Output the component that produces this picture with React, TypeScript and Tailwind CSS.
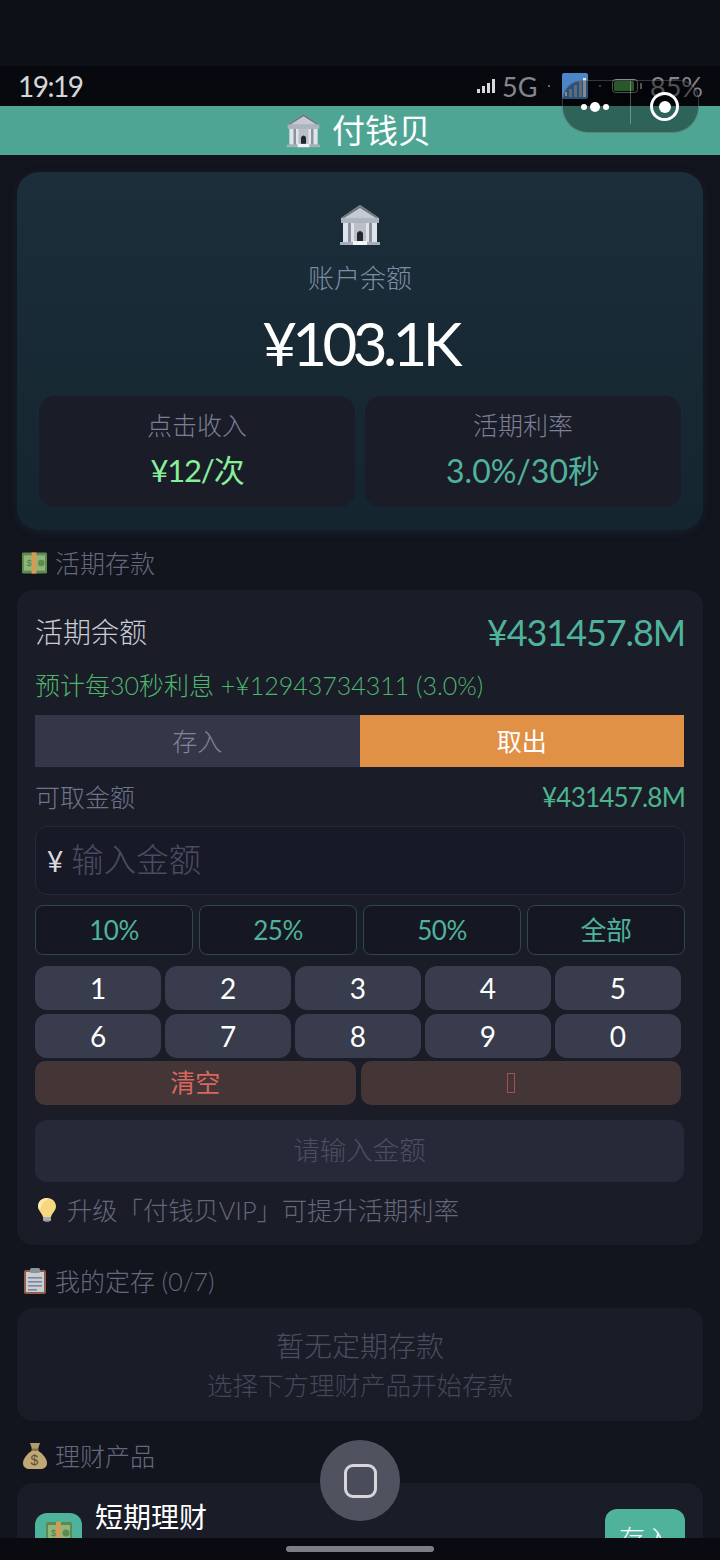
import React from "react";

function Bank({ className }: { className: string }) {
  return (
    <svg viewBox="0 0 42 42" className={className}>
      <path d="M21 1 L40 14 H2 Z" fill="#c4cad3" />
      <path d="M21 1 L40 14 H37 L21 4 L5 14 H2 Z" fill="#6f7681" />
      <rect x="2" y="14" width="38" height="5" fill="#aeb4bf" />
      <rect x="4" y="19" width="34" height="19" fill="#dfe3ea" />
      <rect x="9" y="19" width="3" height="19" fill="#8c929e" />
      <rect x="30" y="19" width="3" height="19" fill="#8c929e" />
      <rect x="15" y="19" width="12" height="19" fill="#b9bec8" />
      <path d="M18 38 V29 Q21 25 24 29 V38 Z" fill="#23262e" />
      <rect x="1" y="38" width="40" height="3" fill="#a9afba" />
      <rect x="14" y="37" width="14" height="4" fill="#f3f4f6" />
    </svg>
  );
}

function Cash({ className }: { className: string }) {
  return (
    <svg viewBox="0 0 26 24" className={className}>
      <rect x="0" y="1" width="26" height="22" rx="1.5" fill="#5d8a4e" />
      <rect x="2" y="4" width="22" height="16" fill="#8fb57b" />
      <rect x="10" y="1" width="5" height="22" fill="#d59a55" />
      <text x="5" y="15" fontSize="9" fill="#4d7a42" fontFamily="Liberation Sans, sans-serif">$</text>
      <circle cx="20" cy="12" r="3.5" fill="#5d8a4e" />
    </svg>
  );
}

function Bulb({ className }: { className: string }) {
  return (
    <svg viewBox="0 0 18 24" className={className}>
      <path d="M9 0 C3.5 0 0 4 0 8.5 C0 12.5 4 15 5 19 H13 C14 15 18 12.5 18 8.5 C18 4 14.5 0 9 0 Z" fill="#f6d77e" />
      <path d="M9 0 C3.5 0 0 4 0 8.5 C0 10 1 11 2 12 C3 7 6 3 11 0.3 Z" fill="#fbe9ad" />
      <rect x="5" y="19" width="8" height="4" rx="1" fill="#a8abb3" />
      <rect x="6.5" y="22.5" width="5" height="1.5" rx=".7" fill="#7d808a" />
    </svg>
  );
}

function Clip({ className }: { className: string }) {
  return (
    <svg viewBox="0 0 22 26" className={className}>
      <rect x="0" y="2" width="22" height="24" rx="2" fill="#94604d" />
      <rect x="2" y="4" width="18" height="20" fill="#c9ced6" />
      <rect x="6" y="0" width="10" height="5" rx="1.5" fill="#8d919a" />
      <rect x="4" y="9" width="14" height="1.6" fill="#7f8794" />
      <rect x="4" y="13" width="14" height="1.6" fill="#7f8794" />
      <rect x="4" y="17" width="14" height="1.6" fill="#7f8794" />
      <rect x="4" y="21" width="9" height="1.6" fill="#7f8794" />
    </svg>
  );
}

function Bag({ className }: { className: string }) {
  return (
    <svg viewBox="0 0 24 26" className={className}>
      <path d="M7 0 H17 L15 6 H9 Z" fill="#b39a6c" />
      <rect x="8.5" y="5.5" width="7" height="2" fill="#8a6f47" />
      <path d="M9 7.5 H15 C20 11 24 16 24 20 C24 24 21 26 17 26 H7 C3 26 0 24 0 20 C0 16 4 11 9 7.5 Z" fill="#c0a877" />
      <text x="7.5" y="22" fontSize="14" fill="#5f4f33" fontFamily="Liberation Sans, sans-serif">$</text>
    </svg>
  );
}

function SectionTitle({ icon, className, children }: { icon: React.ReactNode; className: string; children: React.ReactNode }) {
  return (
    <div className={`flex items-center pl-[5px] text-[25px] font-light text-[#646a7d] ${className}`}>
      <span className="mr-[8px] flex w-[25px] justify-center">{icon}</span>
      <span>{children}</span>
    </div>
  );
}

const keys = ["1", "2", "3", "4", "5", "6", "7", "8", "9", "0"];
const pcts = ["10%", "25%", "50%", "全部"];

export default function App() {
  return (
    <div
      className="relative h-[1560px] w-[720px] overflow-hidden bg-[#12141e] leading-none text-white"
      style={{ fontFamily: 'Lato, "Noto Sans CJK SC", sans-serif' }}
    >
      <div className="h-[66px] bg-[#0e1018]" />
      <div className="flex h-[40px] items-center justify-between bg-[#08090f] pl-[18px] pr-[17px]">
        <span className="text-[28px] tracking-[-1.5px] text-[#d6d6d8]">19:19</span>
        <div className="flex items-center text-[27px] text-[#85868c]">
          <svg viewBox="0 0 18 14" className="h-[14px] w-[18px]">
            <rect x="0" y="10" width="3" height="4" fill="#d8d8dc" />
            <rect x="5" y="7" width="3" height="7" fill="#d8d8dc" />
            <rect x="10" y="4" width="3" height="10" fill="#d8d8dc" />
            <rect x="15" y="0" width="3" height="14" fill="#d8d8dc" />
          </svg>
          <span className="ml-[7px] w-[34px]">5G</span>
          <span className="ml-[12px] h-[2px] w-[2px] rounded-full bg-[#85868c]" />
          <svg viewBox="0 0 26 26" className="ml-[12px] h-[26px] w-[26px]">
            <rect width="26" height="26" rx="2" fill="#4a86c8" />
            <rect x="3" y="19" width="2" height="4" fill="#dfe6ee" />
            <rect x="7" y="16" width="3" height="8" fill="#9cb4cc" />
            <rect x="12" y="12" width="3" height="12" fill="#9cb4cc" />
            <rect x="17" y="8" width="3" height="16" fill="#9cb4cc" />
            <rect x="21" y="5" width="3" height="19" fill="#dfe6ee" />
          </svg>
          <span className="ml-[11px] h-[2px] w-[2px] rounded-full bg-[#85868c]" />
          <svg viewBox="0 0 30 14" className="ml-[11px] h-[14px] w-[30px]">
            <rect x="0.5" y="0.5" width="25" height="13" rx="3" fill="none" stroke="#8a8b90" />
            <rect x="2" y="2" width="20" height="10" rx="1.5" fill="#449146" />
            <rect x="28" y="4" width="2" height="6" fill="#8a8b90" />
          </svg>
          <span className="ml-[8px]">85%</span>
        </div>
      </div>
      <div className="flex h-[49px] items-center justify-center bg-[#4ea594] pr-[3px] text-[33px] font-normal text-white">
        <Bank className="mr-[11px] h-[35px] w-[35px]" />
        <span>付钱贝</span>
      </div>

      <main className="flex flex-col px-[17px] pt-[17px]">
        <section className="flex h-[358px] flex-col items-center rounded-[22px] bg-linear-to-b from-[#1c2e3a] to-[#14252f] px-[22px] pt-[32px] shadow-[0_2px_10px_rgba(30,70,80,0.25)]">
          <Bank className="h-[42px] w-[42px]" />
          <div className="mt-[19px] text-[26px] font-light text-[#7f8ca6]">账户余额</div>
          <div className="mt-[22px] text-[60px] font-normal tracking-[-4.6px] text-white">¥103.1K</div>
          <div className="mt-[23px] grid w-full grid-cols-2 gap-[10px]">
            <div className="flex h-[111px] flex-col items-center rounded-[16px] bg-[#1a1c28] pt-[17px]">
              <div className="text-[25px] font-light text-[#7b8095]">点击收入</div>
              <div className="mt-[17px] text-[31px] tracking-[-1.2px] text-[#86ef9a]">¥12/次</div>
            </div>
            <div className="flex h-[111px] flex-col items-center rounded-[16px] bg-[#1a1c28] pt-[17px]">
              <div className="text-[25px] font-light text-[#7b8095]">活期利率</div>
              <div className="mt-[17px] text-[32px] text-[#4fb39b]">3.0%/30秒</div>
            </div>
          </div>
        </section>

        <SectionTitle className="h-[60px] pt-[6px]" icon={<Cash className="h-[24px] w-[26px]" />}>活期存款</SectionTitle>

        <section className="flex h-[655px] flex-col rounded-[16px] bg-[#1a1c28] px-[18px] pt-[23px]">
          <div className="flex h-[38px] items-center justify-between">
            <span className="text-[28px] font-light text-[#c9ccd4]">活期余额</span>
            <span className="text-[36px] tracking-[-1.1px] text-[#4fb39b]">¥431457.8M</span>
          </div>
          <div className="mt-[22px] text-[25px] font-light text-[#4db56e]">预计每30秒利息 +¥12943734311 (3.0%)</div>
          <div className="mt-[17px] grid h-[52px] w-[649px] grid-cols-2 text-[25px]">
            <div className="flex items-center justify-center bg-[#353749] font-light text-[#80849b]">存入</div>
            <div className="flex items-center justify-center bg-[#e09146] text-white">取出</div>
          </div>
          <div className="mt-[17px] flex h-[26px] items-center justify-between">
            <span className="text-[25px] font-light text-[#6f7488]">可取金额</span>
            <span className="text-[26px] tracking-[-0.8px] text-[#4cb58e]">¥431457.8M</span>
          </div>
          <div className="mt-[16px] flex h-[69px] w-[650px] items-center rounded-[12px] border border-[#262a38] bg-[#171927] pl-[11px]">
            <span className="text-[28px] text-[#d8d9de]">¥</span>
            <span className="ml-[8px] text-[32.5px] font-light text-[#4a4d60]">输入金额</span>
          </div>
          <div className="mt-[10px] grid w-[650px] grid-cols-4 gap-[6px]">
            {pcts.map((p) => (
              <div key={p} className="flex h-[50px] items-center justify-center rounded-[8px] border border-[#2a4a4c] bg-[#151722] text-[26px] tracking-[-0.5px] text-[#4fb39b]">
                {p}
              </div>
            ))}
          </div>
          <div className="mt-[11px] grid w-[646px] grid-cols-5 gap-[3.5px]">
            {keys.map((k) => (
              <div key={k} className="flex h-[44px] items-center justify-center rounded-[12px] bg-[#393c4c] text-[28px] font-normal text-white">
                {k}
              </div>
            ))}
          </div>
          <div className="mt-[3px] grid w-[646px] grid-cols-2 gap-[5px]">
            <div className="flex h-[44px] items-center justify-center rounded-[10px] bg-[#443636] text-[25px] text-[#d9665f]">清空</div>
            <div className="flex h-[44px] items-center justify-center rounded-[10px] bg-[#443636]">
              <span className="mr-[20px] h-[20px] w-[8px] border border-[#a0524e]" />
            </div>
          </div>
          <div className="mt-[15px] flex h-[62px] w-[649px] items-center justify-center rounded-[12px] bg-[#272938] text-[26.5px] font-light text-[#4c4f62]">
            请输入金额
          </div>
          <div className="mt-[16px] flex items-center pl-[3px] text-[25.3px] font-light text-[#636779]">
            <Bulb className="h-[24px] w-[18px]" />
            <span className="ml-[11px]">升级「付钱贝VIP」可提升活期利率</span>
          </div>
        </section>

        <SectionTitle className="h-[63px] pt-[9px]" icon={<Clip className="h-[26px] w-[22px]" />}>我的定存 (0/7)</SectionTitle>

        <section className="flex h-[113px] flex-col items-center rounded-[16px] bg-[#1a1c28] pt-[24px] font-light">
          <div className="text-[28px] text-[#4a4e61]">暂无定期存款</div>
          <div className="mt-[13px] text-[25.5px] text-[#444859]">选择下方理财产品开始存款</div>
        </section>

        <SectionTitle className="h-[62px] pt-[8px]" icon={<Bag className="h-[26px] w-[24px]" />}>理财产品</SectionTitle>

        <section className="flex h-[130px] items-start justify-between rounded-[16px] bg-[#1a1c28] pl-[18px] pr-[18px] pt-[20px]">
          <div className="flex items-start">
            <div className="mt-[10px] flex h-[47px] w-[47px] items-start justify-center rounded-[12px] bg-[#4fb39b] pt-[8px]">
              <Cash className="h-[24px] w-[30px]" />
            </div>
            <span className="ml-[13px] text-[28px] font-normal text-white">短期理财</span>
          </div>
          <div className="mt-[6px] flex h-[60px] w-[80px] items-center justify-center rounded-[12px] bg-[#4fb39b] text-[26px] font-light text-white">存入</div>
        </section>
      </main>

      {/* WeChat capsule over the status bar */}
      <div className="absolute left-[562px] top-[80px] flex h-[53px] w-[137px] items-center rounded-b-[26px] rounded-t-[20px] border border-white/20 bg-black/40">
        <div className="flex w-[67px] items-center justify-center gap-[3px] pr-[3px]">
          <span className="h-[6px] w-[6px] rounded-full bg-white" />
          <span className="h-[10px] w-[10px] rounded-full bg-white" />
          <span className="h-[6px] w-[6px] rounded-full bg-white" />
        </div>
        <span className="h-[43px] w-px self-start bg-white/30" />
        <div className="flex flex-1 items-center justify-center">
          <span className="flex h-[29px] w-[29px] items-center justify-center rounded-full border-[3px] border-white">
            <span className="h-[12px] w-[12px] rounded-full bg-white" />
          </span>
        </div>
      </div>

      {/* Floating button */}
      <div className="absolute left-[320px] top-[1440px] flex h-[81px] w-[80px] items-center justify-center rounded-full bg-[#50525f]">
        <span className="h-[34px] w-[33px] rounded-[9px] border-[3px] border-[#d6d7dc] bg-[#4a4c59]" />
      </div>

      {/* System navigation bar */}
      <div className="absolute bottom-0 left-0 flex h-[22px] w-[720px] justify-center bg-[#0a0b10] pt-[8px]">
        <span className="h-[6px] w-[148px] rounded-full bg-[#7d7e83]" />
      </div>
    </div>
  );
}
